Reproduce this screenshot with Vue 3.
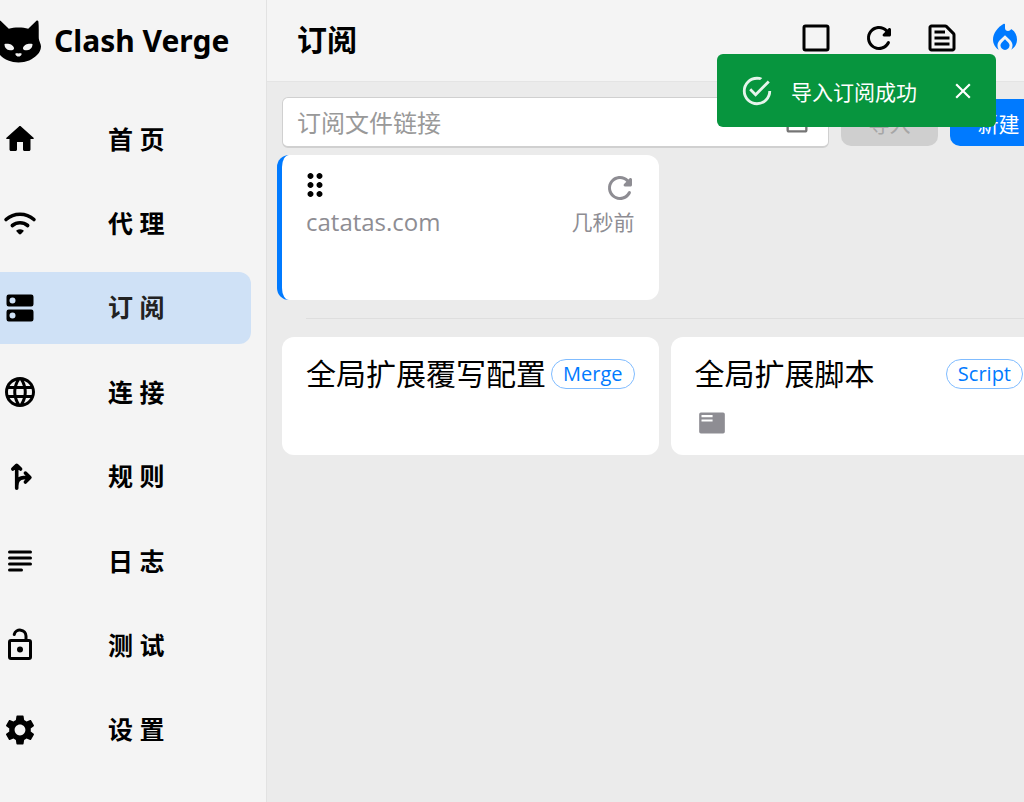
<script setup>
import { ref } from 'vue'

const url = ref('')
const toastOpen = ref(true)

const navItems = [
  { label: '首 页', icon: 'home' },
  { label: '代 理', icon: 'wifi' },
  { label: '订 阅', icon: 'dns', active: true },
  { label: '连 接', icon: 'globe' },
  { label: '规 则', icon: 'fork' },
  { label: '日 志', icon: 'lines' },
  { label: '测 试', icon: 'lock' },
  { label: '设 置', icon: 'gear' },
]
</script>

<template>
  <div class="app">
    <aside class="sidebar">
      <div class="brand">
        <svg class="cat" viewBox="0 0 46 43" aria-hidden="true">
          <path
            fill="#000"
            fill-rule="evenodd"
            d="M3.6 1.5C3.9.3 5 .2 5.8.9L13.800 8.800C16.500 7.900 19.800 7.600 23.500 7.600S30.500 7.900 33.200 8.800L41.200.9C42 .2 43.200.3 43.400 1.500C44 7 43.600 13 43.800 18.500C44 21.500 46 23.500 46 26.500C45.800 30 44.500 32.500 42.500 34.500C38 39.500 31 42.500 23.500 42.500S9 39.500 4.500 34.500C2.500 32.500 1.200 30 1 26.500C1 23.500 3 21.500 3.200 18.500C3.400 13 3 7 3.600 1.500ZM9.500 24C9.500 27.500 11.500 30 15 30.300C17.500 30.500 19.200 29.800 19 28C18.200 24.300 13 22.900 9.500 24ZM37.500 24C34 22.900 28.800 24.300 28 28C27.800 29.800 29.500 30.500 32 30.300C35.500 30 37.500 27.500 37.500 24ZM20.300 33.700C20.500 35.500 22 36.600 23.500 36.600S26.500 35.500 26.700 33.700C25.500 33 24.500 33.500 23.500 33.500S21.500 33 20.300 33.700Z"
          />
        </svg>
        <span class="brand-name">Clash Verge</span>
      </div>
      <nav class="nav">
        <a
          v-for="item in navItems"
          :key="item.icon"
          href="#"
          class="nav-item"
          :class="{ active: item.active }"
        >
          <svg class="icon" viewBox="0 0 24 24" aria-hidden="true">
            <path
              v-if="item.icon === 'home'"
              d="M10 19v-5h4v5c0 .55.45 1 1 1h3c.55 0 1-.45 1-1v-7h1.700c.46 0 .68-.57.33-.87L12.670 3.600c-.38-.34-.96-.34-1.340 0l-8.360 7.530c-.34.3-.13.87.33.87H5v7c0 .55.45 1 1 1h3c.55 0 1-.45 1-1z"
            />
            <g v-else-if="item.icon === 'wifi'">
              <path class="stroke thick" d="M2.700 9C8 4.300 16 4.300 21.300 9M6.900 13C9.900 10.500 14.100 10.500 17.100 13" />
              <path d="M9.900 17.200c-.5-.5-.4-1 .1-1.200 1.300-.7 2.700-.7 4 0 .5.200.6.700.1 1.200l-1.400 1.500c-.4.400-1 .400-1.400 0z" />
            </g>
            <path
              v-else-if="item.icon === 'dns'"
              fill-rule="evenodd"
              d="M4.500 3h15A1.500 1.500 0 0 1 21 4.500v5a1.500 1.500 0 0 1-1.500 1.500h-15A1.500 1.500 0 0 1 3 9.500v-5A1.500 1.500 0 0 1 4.500 3zM7 5a2 2 0 1 0 0 4 2 2 0 0 0 0-4zM4.500 13h15a1.500 1.500 0 0 1 1.500 1.500v5a1.500 1.500 0 0 1-1.500 1.500h-15A1.500 1.500 0 0 1 3 19.500v-5A1.500 1.500 0 0 1 4.500 13zM7 15a2 2 0 1 0 0 4 2 2 0 0 0 0-4z"
            />
            <path
              v-else-if="item.icon === 'globe'"
              d="M11.990 2C6.470 2 2 6.480 2 12s4.470 10 9.990 10C17.520 22 22 17.520 22 12S17.520 2 11.990 2zm6.930 6h-2.950c-.32-1.250-.78-2.450-1.380-3.560 1.840.63 3.370 1.910 4.330 3.560zM12 4.040c.83 1.200 1.480 2.530 1.910 3.960h-3.820c.43-1.430 1.080-2.760 1.910-3.960zM4.260 14C4.100 13.360 4 12.690 4 12s.1-1.360.26-2h3.380c-.08.66-.14 1.320-.14 2 0 .68.06 1.340.14 2H4.260zm.82 2h2.950c.32 1.250.78 2.450 1.380 3.560-1.840-.63-3.370-1.900-4.330-3.560zm2.950-8H5.080c.96-1.660 2.490-2.930 4.330-3.560C8.810 5.550 8.350 6.750 8.030 8zM12 19.960c-.83-1.200-1.480-2.530-1.910-3.960h3.820c-.43 1.430-1.080 2.760-1.910 3.960zM14.340 14H9.660c-.09-.66-.16-1.320-.16-2 0-.68.07-1.350.16-2h4.680c.09.65.16 1.320.16 2 0 .68-.07 1.340-.16 2zm.25 5.560c.6-1.110 1.060-2.310 1.380-3.560h2.950c-.96 1.650-2.490 2.930-4.330 3.560zM16.360 14c.08-.66.14-1.320.14-2 0-.68-.06-1.340-.14-2h3.380c.16.64.26 1.310.26 2s-.1 1.360-.26 2h-3.380z"
            />
            <path
              v-else-if="item.icon === 'fork'"
              class="stroke thick"
              d="M9.800 19.500V5M7.200 6.700l2.600-2.500 2.600 2.500M9.800 18C9.800 14.500 11.500 12.400 14.500 12.400H18M15.600 9.400l3 3-3 3"
            />
            <path
              v-else-if="item.icon === 'lines'"
              class="stroke"
              d="M5 6h14M5 10h14M5 14h14M5 18h8"
            />
            <g v-else-if="item.icon === 'lock'">
              <rect class="stroke" x="5" y="9" width="14" height="12" rx="1" />
              <path class="stroke" d="M16 9V6A4 4 0 0 0 8.150 5" />
              <circle cx="12" cy="15" r="2" />
            </g>
            <path
              v-else
              d="M19.140 12.940c.04-.3.06-.61.06-.94 0-.32-.02-.64-.07-.94l2.030-1.580c.18-.14.23-.41.12-.61l-1.920-3.320c-.12-.22-.37-.29-.59-.22l-2.390.96c-.5-.38-1.030-.7-1.620-.94l-.36-2.540c-.04-.24-.24-.41-.48-.41h-3.840c-.24 0-.43.17-.47.41l-.36 2.540c-.59.24-1.130.57-1.620.94l-2.390-.96c-.22-.08-.47 0-.59.22L2.740 8.870c-.12.21-.08.47.12.61l2.030 1.580c-.05.3-.09.63-.09.94s.02.64.07.94l-2.030 1.580c-.18.14-.23.41-.12.61l1.920 3.320c.12.22.37.29.59.22l2.390-.96c.5.38 1.030.7 1.620.94l.36 2.540c.05.24.24.41.48.41h3.840c.24 0 .44-.17.47-.41l.36-2.540c.59-.24 1.130-.56 1.620-.94l2.390.96c.22.08.47 0 .59-.22l1.920-3.320c.12-.22.07-.47-.12-.61l-2.010-1.580zM12 15.600c-1.980 0-3.600-1.620-3.600-3.600s1.620-3.600 3.600-3.600 3.600 1.620 3.600 3.600-1.620 3.600-3.600 3.600z"
            />
          </svg>
          <span>{{ item.label }}</span>
        </a>
      </nav>
    </aside>

    <main class="main">
      <header class="header">
        <h1>订阅</h1>
        <div class="header-actions">
          <button type="button" class="icon-btn" aria-label="选择">
            <svg class="icon" viewBox="0 0 24 24"><rect class="stroke" x="4" y="4" width="16" height="16" rx="1" /></svg>
          </button>
          <button type="button" class="icon-btn" aria-label="更新">
            <svg class="icon" viewBox="0 0 24 24">
              <path d="M17.650 6.350c-1.630-1.630-3.940-2.570-6.480-2.310-3.670.37-6.690 3.350-7.100 7.020C3.520 15.910 7.270 20 12 20c3.190 0 5.930-1.870 7.210-4.560.32-.67-.16-1.440-.9-1.440-.37 0-.72.2-.88.53-1.130 2.430-3.840 3.970-6.800 3.310-2.220-.49-4.010-2.300-4.480-4.520C5.310 9.440 8.260 6 12 6c1.660 0 3.140.69 4.220 1.780l-1.510 1.510c-.63.63-.19 1.710.7 1.710H19c.55 0 1-.45 1-1V6.410c0-.89-1.080-1.340-1.710-.71l-.64.65z" />
            </svg>
          </button>
          <button type="button" class="icon-btn" aria-label="运行配置">
            <svg class="icon" viewBox="0 0 24 24">
              <path d="M20.410 8.410l-4.830-4.830c-.37-.37-.88-.58-1.410-.58H5c-1.100 0-2 .9-2 2v14c0 1.100.9 2 2 2h14c1.100 0 2-.9 2-2V9.830c0-.53-.21-1.040-.59-1.420zM19 19H5V5h9.170L19 9.830V19zM7 7h7v2H7zM7 11h10v2H7zM7 15h10v2H7z" />
            </svg>
          </button>
          <button type="button" class="icon-btn fire" aria-label="激活">
            <svg class="icon" viewBox="0 0 24 24">
              <path d="M12 12.900l-2.130 2.090c-.56.56-.87 1.290-.87 2.070C9 18.680 10.350 20 12 20s3-1.320 3-2.940c0-.78-.31-1.520-.87-2.070L12 12.900z" />
              <path d="M12 2.900v2.400c0 1.900 2.200 2.700 3.600 1.300.3-.3.500-.6 1-.3 2.100 1.400 3.400 3.900 3.400 6.700 0 2.900-1.500 5.400-3.850 6.800.55-.8.85-1.700.85-2.750 0-1.330-.52-2.570-1.470-3.500L12 10.100l-3.530 3.460c-.95.94-1.470 2.180-1.470 3.500 0 1.040.33 2 .89 2.800C5.560 18.470 4 15.900 4 13 4 9 7 4.800 11.200 2.500c.4-.2.8 0 .8.400z" />
            </svg>
          </button>
        </div>
      </header>

      <section class="content">
        <form class="import-row" @submit.prevent>
          <div class="field">
            <input v-model="url" type="text" placeholder="订阅文件链接" aria-label="订阅文件链接" />
            <button type="button" class="icon-btn paste" aria-label="粘贴">
              <svg viewBox="0 0 24 24">
                <path d="M19 3h-4.180C14.400 1.840 13.300 1 12 1S9.600 1.840 9.180 3H5c-1.100 0-2 .9-2 2v14c0 1.100.9 2 2 2h14c1.100 0 2-.9 2-2V5c0-1.100-.9-2-2-2zm0 16H5V5h2v3h10V5h2v14z" />
              </svg>
            </button>
          </div>
          <button type="submit" class="btn" disabled>导入</button>
          <button type="button" class="btn primary">新建</button>
        </form>

        <div class="grid">
          <article class="card selected">
            <div class="card-tools">
              <button type="button" class="icon-btn drag" aria-label="拖动">
                <svg class="icon" viewBox="0 0 24 24">
                  <path d="M11 18c0 1.100-.9 2-2 2s-2-.9-2-2 .9-2 2-2 2 .9 2 2zm-2-8c-1.100 0-2 .9-2 2s.9 2 2 2 2-.9 2-2-.9-2-2-2zm0-6c-1.100 0-2 .9-2 2s.9 2 2 2 2-.9 2-2-.9-2-2-2zm6 4c1.100 0 2-.9 2-2s-.9-2-2-2-2 .9-2 2 .9 2 2 2zm0 2c-1.100 0-2 .9-2 2s.9 2 2 2 2-.9 2-2-.9-2-2-2zm0 6c-1.100 0-2 .9-2 2s.9 2 2 2 2-.9 2-2-.9-2-2-2z" />
                </svg>
              </button>
              <button type="button" class="icon-btn reload" aria-label="刷新">
                <svg class="icon" viewBox="0 0 24 24">
                  <path d="M17.650 6.350c-1.630-1.630-3.940-2.570-6.480-2.310-3.670.37-6.690 3.350-7.100 7.020C3.520 15.910 7.270 20 12 20c3.190 0 5.930-1.870 7.210-4.560.32-.67-.16-1.440-.9-1.440-.37 0-.72.2-.88.53-1.130 2.430-3.840 3.970-6.800 3.310-2.220-.49-4.010-2.300-4.480-4.520C5.310 9.440 8.260 6 12 6c1.660 0 3.140.69 4.220 1.780l-1.510 1.510c-.63.63-.19 1.710.7 1.710H19c.55 0 1-.45 1-1V6.410c0-.89-1.080-1.340-1.710-.71l-.64.65z" />
                </svg>
              </button>
            </div>
            <div class="card-meta">
              <span>catatas.com</span>
              <time>几秒前</time>
            </div>
          </article>
        </div>

        <hr class="divider" />

        <div class="grid">
          <article class="card">
            <div class="card-title">
              <h2>全局扩展覆写配置</h2>
              <span class="chip">Merge</span>
            </div>
          </article>
          <article class="card">
            <div class="card-title">
              <h2>全局扩展脚本</h2>
              <span class="chip">Script</span>
            </div>
            <button type="button" class="icon-btn console" aria-label="脚本日志">
              <svg viewBox="0 0 24 24">
                <path fill-rule="evenodd" d="M2.500 3h19A1.500 1.500 0 0 1 23 4.500v15a1.500 1.500 0 0 1-1.500 1.500h-19A1.500 1.500 0 0 1 1 19.500v-15A1.500 1.500 0 0 1 2.500 3zM3 5.200V7h9.500V5.200zM3 9v1.800h9.500V9z" />
              </svg>
            </button>
          </article>
        </div>
      </section>
    </main>

    <div v-if="toastOpen" class="toast" role="alert">
      <svg class="toast-icon" viewBox="0 0 24 24" aria-hidden="true">
        <path d="M20,12A8,8 0 0,1 12,20A8,8 0 0,1 4,12A8,8 0 0,1 12,4C12.760,4 13.500,4.110 14.200,4.310L15.770,2.740C14.610,2.260 13.340,2 12,2A10,10 0 0,0 2,12A10,10 0 0,0 12,22A10,10 0 0,0 22,12M7.910,10.080L6.500,11.500L11,16L21,6L19.590,4.580L11,13.170L7.910,10.080Z" />
      </svg>
      <span>导入订阅成功</span>
      <button type="button" class="icon-btn close" aria-label="关闭" @click="toastOpen = false">
        <svg viewBox="0 0 24 24">
          <path d="M19 6.410L17.590 5 12 10.590 6.410 5 5 6.410 10.590 12 5 17.590 6.410 19 12 13.410 17.590 19 19 17.590 13.410 12z" />
        </svg>
      </button>
    </div>
  </div>
</template>

<style>
body {
  margin: 0;
  overflow: hidden;
}
</style>

<style scoped>
.app {
  position: relative;
  display: flex;
  min-height: 100vh;
  overflow: hidden;
  background: #ebebeb;
  color: #000;
  font-family: "Open Sans", "Noto Sans CJK SC", sans-serif;
}

* {
  box-sizing: border-box;
}

svg {
  display: block;
  flex: none;
  fill: currentColor;
}

.icon {
  width: 36px;
  height: 36px;
}

.stroke {
  fill: none;
  stroke: currentColor;
  stroke-width: 2;
  stroke-linecap: round;
  stroke-linejoin: round;
}

.stroke.thick {
  stroke-width: 2.4;
}

button,
input {
  margin: 0;
  padding: 0;
  border: 0;
  background: none;
  color: inherit;
  font: inherit;
}

.icon-btn {
  display: block;
  cursor: pointer;
}

.sidebar {
  display: flex;
  flex: 0 0 267px;
  flex-direction: column;
  padding-bottom: 30px;
  border-right: 1px solid #e2e2e2;
  background: #f4f4f4;
}

.brand {
  display: flex;
  align-items: center;
  gap: 13px;
  height: 97px;
  padding-bottom: 15px;
}

.cat {
  width: 46px;
  height: 43px;
  margin-left: -5px;
}

.brand-name {
  font-family: "Noto Sans", sans-serif;
  font-size: 30px;
  font-weight: 700;
  line-height: 40px;
  white-space: nowrap;
}

.nav {
  display: grid;
  flex: 1;
  grid-auto-rows: 1fr;
}

.nav-item {
  display: flex;
  align-items: center;
  gap: 70px;
  margin: 6px 15px 6px 0;
  padding-left: 2px;
  border-radius: 0 12px 12px 0;
  color: #000;
  font-size: 25px;
  font-weight: 700;
  text-decoration: none;
}

.nav-item span {
  padding-bottom: 3px;
}

.nav-item.active {
  background: #cfe1f6;
}

.nav-item.active span {
  color: #222;
}

.main {
  flex: 1;
  min-width: 0;
}

.header {
  display: flex;
  align-items: center;
  justify-content: space-between;
  height: 82px;
  padding: 0 1px 5px 30px;
  border-bottom: 1px solid #e4e4e4;
  background: #f4f4f4;
}

h1 {
  margin: 0;
  font-size: 30px;
  font-weight: 700;
}

.header-actions {
  display: flex;
  gap: 27px;
}

.fire {
  color: #007aff;
}

/* The card area runs past the right edge of the window. */
.content {
  margin-right: -23px;
  padding: 15px 0 0 15px;
}

.import-row {
  display: flex;
  align-items: center;
  gap: 12px;
  margin-bottom: 7px;
}

.field {
  display: flex;
  flex: 1;
  align-items: center;
  height: 51px;
  padding: 0 17px 0 14px;
  border: 1px solid #d0d0d0;
  border-bottom-width: 2px;
  border-radius: 6px;
  background: #fff;
}

.field input {
  flex: 1;
  min-width: 0;
  height: 100%;
  outline: 0;
  font-size: 24px;
}

.field input::placeholder {
  color: #999;
  opacity: 1;
}

.paste {
  color: #757575;
}

.paste svg,
.console svg {
  width: 28px;
  height: 28px;
}

.btn {
  width: 97px;
  height: 47px;
  border-radius: 10px;
  background: #cfcfcf;
  color: #a6a6a6;
  font-size: 21px;
}

.btn.primary {
  background: #007aff;
  color: #fff;
}

.grid {
  display: grid;
  grid-template-columns: 1fr 1fr;
  gap: 12px;
}

.card {
  min-height: 118px;
  padding: 14px 24px;
  border-radius: 12px;
  background: #fff;
}

.card.selected {
  min-height: 145px;
  margin-left: -5px;
  padding: 12px 24px;
  border-left: 5px solid #007aff;
}

.card-tools {
  display: flex;
  justify-content: space-between;
  height: 39px;
}

.drag {
  align-self: flex-start;
  margin-left: -9px;
}

.reload {
  align-self: flex-end;
  margin-right: -3px;
  color: #8e8d93;
}

.card-meta {
  display: flex;
  align-items: center;
  justify-content: space-between;
  color: #8e8d93;
  font-size: 24px;
  line-height: 32px;
}

.card-meta time {
  font-size: 21px;
}

.divider {
  height: 1px;
  margin: 18px 0 18px 24px;
  border: 0;
  background: #dedede;
}

.card-title {
  display: flex;
  align-items: center;
  justify-content: space-between;
  height: 46px;
}

h2 {
  margin: 0;
  font-size: 30px;
  font-weight: 400;
  line-height: 46px;
  white-space: nowrap;
}

.chip {
  padding: 0 11px;
  border: 1px solid #80bcff;
  border-radius: 16px;
  color: #007aff;
  font-size: 20px;
  line-height: 28px;
}

.console {
  margin: 12px 3px 0;
  color: #8e8d93;
}

.toast {
  position: absolute;
  top: 54px;
  right: 28px;
  display: flex;
  align-items: center;
  height: 73px;
  padding: 0 20px 0 23px;
  border-radius: 6px;
  background: #07953e;
  color: #fff;
  font-size: 21px;
}

.toast-icon {
  width: 34px;
  height: 34px;
  margin-right: 17px;
  opacity: 0.9;
}

.close {
  margin-left: 33px;
}

.close svg {
  width: 26px;
  height: 26px;
}
</style>
